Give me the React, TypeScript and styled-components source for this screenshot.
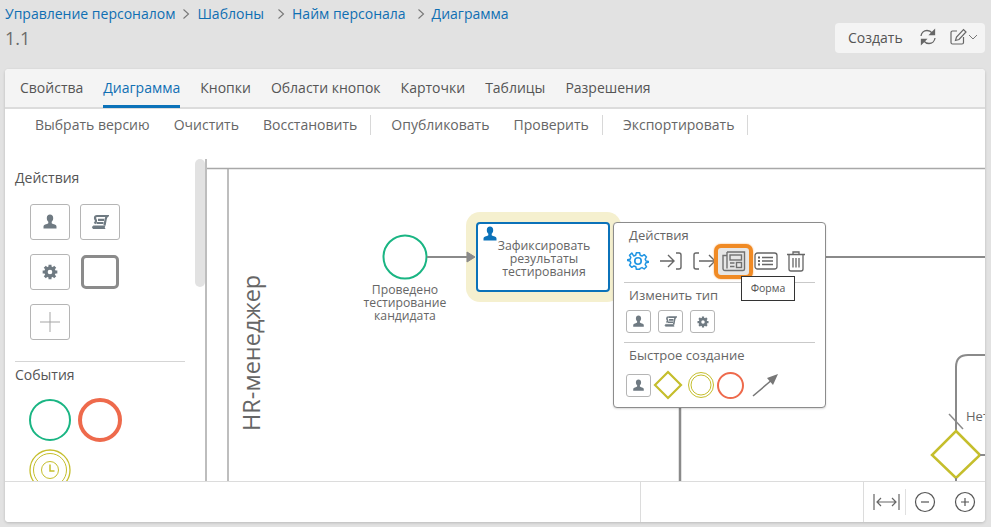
import React from 'react';
import styled, { createGlobalStyle } from 'styled-components';

const colors = {
  link: '#0f6fb3',
  text: '#555555',
  icon: '#6f7a82',
  border: '#b5b5b5',
  line: '#8a8a8a',
  green: '#1ab583',
  red: '#ee6a4c',
  olive: '#c5be2c',
  blue: '#0b72b9',
};

const GlobalStyle = createGlobalStyle`
  html, body {
    margin: 0;
    padding: 0;
    background: #e2e2e2;
    font-family: "Open Sans", "Noto Sans", sans-serif;
    overflow: hidden;
  }
`;

const Page = styled('div')`
  display: flex;
  flex-direction: column;
  width: 991px;
  height: 527px;
  overflow: hidden;
`;

const Header = styled('header')`
  display: flex;
  justify-content: space-between;
  height: 69px;
  padding: 4px 6px 0 5px;
  box-sizing: border-box;
`;

const Crumbs = styled('nav')`
  display: flex;
  align-items: center;
  gap: 4px;
  height: 19px;
  font-size: 14px;
  color: ${colors.link};
`;

const Crumb = styled('span')<{ $after?: number }>`
  margin-right: ${props => props.$after ?? 0}px;
`;

const Title = styled('div')`
  margin-top: 3px;
  font-size: 18px;
  line-height: 24px;
  color: #6b6b6b;
`;

const HeaderTools = styled('div')`
  display: flex;
  align-items: center;
  align-self: flex-start;
  box-sizing: border-box;
  width: 150px;
  height: 30px;
  margin-top: 19px;
  padding: 0 0 2px 13px;
  background: #f4f4f4;
  border-radius: 4px;
  font-size: 14px;
  color: ${colors.text};
`;

const CreateLabel = styled('span')`
  margin-right: 16px;
`;

const ToolGap = styled('span')`
  width: 12px;
`;

const Card = styled('main')`
  display: flex;
  flex-direction: column;
  flex: 1;
  margin: 0 6px 5px 5px;
  background: #fff;
  border-radius: 4px;
  box-shadow: 0 1px 3px rgba(0, 0, 0, 0.18);
  overflow: hidden;
`;

const Tabs = styled('div')`
  display: flex;
  gap: 20px;
  flex: none;
  box-sizing: border-box;
  height: 40px;
  padding-left: 15px;
  background: #f4f4f4;
  border-bottom: 2px solid #dcdcdc;
`;

const Tab = styled('div')<{ $active?: boolean }>`
  height: 39px;
  box-sizing: border-box;
  padding-top: 9px;
  font-size: 14px;
  line-height: 20px;
  color: ${props => (props.$active ? colors.link : '#555')};
  border-bottom: 3px solid ${props => (props.$active ? colors.blue : 'transparent')};
`;

const Actions = styled('div')`
  display: flex;
  align-items: center;
  flex: none;
  height: 31px;
  padding-left: 30px;
  font-size: 14px;
  color: #666;
`;

const Action = styled('span')`
  margin-right: 24px;
`;

const ActionDivider = styled('span')`
  width: 1px;
  height: 20px;
  margin: 0 20px 0 -11px;
  background: #d8d8d8;
`;

const Body = styled('div')`
  display: flex;
  flex: 1;
  min-height: 0;
`;

const Palette = styled('aside')`
  position: relative;
  flex: none;
  width: 200px;
  box-sizing: border-box;
  padding: 29px 0 0 10px;
  overflow: hidden;
`;

const Scroll = styled('div')`
  position: absolute;
  top: 19px;
  right: 0;
  width: 10px;
  height: 128px;
  background: #e2e2e2;
  border-radius: 5px;
`;

const PaletteTitle = styled('div')`
  font-size: 14px;
  line-height: 18px;
  color: ${colors.text};
`;

const ToolGrid = styled('div')`
  display: grid;
  grid-template-columns: 40px 40px;
  grid-auto-rows: 36px;
  gap: 14px 10px;
  margin: 17px 0 0 15px;
`;

const ToolButton = styled('div')<{ $small?: boolean }>`
  display: flex;
  align-items: center;
  justify-content: center;
  box-sizing: border-box;
  width: ${props => (props.$small ? '25px' : '40px')};
  height: ${props => (props.$small ? '23px' : '36px')};
  background: #fff;
  border: 1px solid ${colors.border};
  border-radius: 3px;
`;

const TaskShape = styled('div')`
  box-sizing: border-box;
  width: 38px;
  height: 34px;
  margin: 1px;
  border: 3px solid #8b8b8b;
  border-radius: 5px;
`;

const PaletteRule = styled('div')`
  width: 170px;
  height: 1px;
  margin: 21px 0 4px;
  background: #d5d5d5;
`;

const EventGrid = styled('div')`
  display: grid;
  grid-template-columns: 44px 44px;
  justify-items: center;
  align-items: center;
  gap: 6px;
  margin: 14px 0 0 13px;
`;

const Canvas = styled('section')`
  position: relative;
  flex: 1;
  overflow: hidden;
  border-left: 2px solid #bdbdbd;
  margin-top: 19px;
`;

const CanvasDrawing = styled('svg')`
  position: absolute;
  left: 0;
  top: 0;
`;

const LaneTitle = styled('div')`
  position: absolute;
  left: 24px;
  top: 116px;
  width: 40px;
  height: 156px;
  writing-mode: vertical-rl;
  transform: rotate(180deg);
  font-size: 23.5px;
  line-height: 40px;
  text-align: center;
  color: #666;
  white-space: nowrap;
`;

const Highlight = styled('div')`
  position: absolute;
  left: 259px;
  top: 53px;
  width: 155px;
  height: 90px;
  background: #f5f0cf;
  border-radius: 14px;
`;

const TaskNode = styled('div')`
  position: absolute;
  left: 269px;
  top: 63px;
  display: flex;
  align-items: center;
  justify-content: center;
  box-sizing: border-box;
  width: 134px;
  height: 70px;
  padding: 3px 0 0 2px;
  background: #fff;
  border: 2px solid ${colors.blue};
  border-radius: 4px;
  font-size: 12.3px;
  line-height: 13px;
  text-align: center;
  color: #666;
`;

const TaskBadge = styled('div')`
  position: absolute;
  left: 4px;
  top: 2px;
  line-height: 0;
`;

const NodeLabel = styled('div')`
  position: absolute;
  left: 148px;
  top: 124px;
  width: 100px;
  font-size: 12.2px;
  line-height: 13px;
  text-align: center;
  color: #666;
`;

const FlowLabel = styled('div')`
  position: absolute;
  left: 759px;
  top: 248px;
  font-size: 13px;
  line-height: 18px;
  color: #666;
`;

const Popup = styled('div')`
  position: absolute;
  left: 406px;
  top: 63px;
  box-sizing: border-box;
  width: 213px;
  height: 186px;
  padding: 3px 10px 0 10px;
  background: #fff;
  border: 1px solid #8c8c8c;
  border-radius: 4px;
  box-shadow: 0 1px 2px rgba(0, 0, 0, 0.15);
`;

const PopupTitle = styled('div')`
  margin-left: 5px;
  font-size: 13px;
  line-height: 18px;
  color: #666;
`;

const PopupRow = styled('div')<{ $gap: number; $top: number; $bottom?: number }>`
  display: flex;
  align-items: center;
  gap: ${props => props.$gap}px;
  margin: ${props => props.$top}px 0 ${props => props.$bottom ?? 0}px 2px;
`;

const PopupIcons = styled('div')`
  display: flex;
  align-items: center;
  height: 28px;
  margin: 3px 0 7px -3px;
`;

const IconSlot = styled('div')<{ $active?: boolean; $shift?: number }>`
  display: flex;
  align-items: center;
  justify-content: center;
  box-sizing: border-box;
  flex: none;
  width: ${props => (props.$active ? '39px' : '33px')};
  height: ${props => (props.$active ? '35px' : '28px')};
  margin: ${props => (props.$active ? '0 -4px 0 -6px' : `0 0 0 ${props.$shift ?? 0}px`)};
  ${props =>
    props.$active &&
    'background: #e6e6e6; border: 4px solid #f08a24; border-radius: 7px; box-shadow: 0 0 2px #f5a65c;'}
`;

const PopupRule = styled('div')`
  height: 1px;
  margin-bottom: 3px;
  background: #c9c9c9;
`;

const Tooltip = styled('div')`
  position: absolute;
  left: 127px;
  top: 53px;
  box-sizing: border-box;
  width: 54px;
  height: 25px;
  background: #fff;
  border: 1px solid #333;
  font-size: 10.5px;
  line-height: 23px;
  text-align: center;
  color: #555;
`;

const Footer = styled('footer')`
  display: flex;
  flex: none;
  height: 40px;
  border-top: 1px solid #dcdcdc;
  background: #fff;
`;

const FooterCell = styled('div')<{ $width: number }>`
  flex: none;
  display: flex;
  align-items: center;
  box-sizing: border-box;
  width: ${props => props.$width}px;
  border-right: 1px solid #dcdcdc;
`;

const Zoom = styled('div')`
  display: flex;
  align-items: center;
  gap: 18px;
  padding-left: 9px;
`;

const ZoomFit = styled('div')`
  display: flex;
  align-items: center;
  margin-right: -10px;
`;

const ZoomDivider = styled('div')`
  width: 1px;
  height: 26px;
  margin-left: 5px;
  background: #e0e0e0;
`;

const Chevron = () => (
  <svg width="14" height="14" viewBox="0 0 14 14" fill="none" stroke="#777" strokeWidth="1.1">
    <path d="M4.5 2.5 9.5 7 4.5 11.5" />
  </svg>
);

const UserIcon: React.FC<{ size?: number; color?: string }> = ({ size = 16, color = colors.icon }) => (
  <svg width={size} height={size} viewBox="0 0 16 16" fill={color}>
    <path d="M8 .5c2 0 3.2 1.5 3.2 3.5 0 1.6-.6 3-1.500 3.800v1.400c0 .5 2.200.9 3.500 1.600.8.4 1.300 1 1.300 1.900v1.800H1.500v-1.800c0-.9.5-1.500 1.300-1.900 1.300-.7 3.500-1.100 3.500-1.600V7.800C5.400 7 4.800 5.600 4.800 4 4.800 2 6 .5 8 .5Z" />
  </svg>
);

const ScriptIcon: React.FC<{ size?: number }> = ({ size = 18 }) => (
  <svg width={size} height={size} viewBox="0 0 18 18" fill="none" stroke={colors.icon} strokeWidth="2.200">
    <path d="M6 3h10.500c-1 .8-1.500 1.500-1.800 3l-1.200 6.500" />
    <path d="M6 3C4.500 3 4 4 4 5c0 1.200 1 1.500 1 3 0 1.300-1 1.800-1.500 2.500" />
    <path d="M7 6.800h6M5.500 10h7" />
    <path d="M2 15.500c-.8-.8-.6-2.200.5-2.500h11.500c-.8.800-.8 1.800 0 2.500z" fill={colors.icon} strokeWidth="1" />
  </svg>
);

const GearIcon: React.FC<{ size?: number; color?: string }> = ({ size = 16, color = colors.icon }) => (
  <svg width={size} height={size} viewBox="0 0 24 24" fill="none" stroke={color} strokeWidth="5">
    <circle cx="12" cy="12" r="6" />
    <path strokeWidth="4.500" d="M12 1v4M12 19v4M1 12h4M19 12h4M4.200 4.200l2.900 2.900M16.900 16.900l2.900 2.900M4.200 19.800l2.900-2.900M16.900 7.100l2.900-2.900" />
  </svg>
);

const OutlineGear = () => (
  <svg width="22" height="22" viewBox="0 0 24 24" fill="none" stroke="#2196e3" strokeWidth="1.800" strokeLinejoin="round">
    <circle cx="12" cy="12" r="3.500" />
    <path d="M10 2h4l.6 3 2.300 1 2.600-1.700 2.800 2.800-1.600 2.600 1 2.300 3 .6v.8l-3 .6-1 2.300 1.600 2.600-2.800 2.800-2.600-1.700-2.300 1L14 22h-4l-.6-3-2.300-1-2.600 1.700-2.800-2.800 1.600-2.600-1-2.300-3-.6v-.8l3-.6 1-2.300-1.600-2.600 2.800-2.800L6.900 6l2.300-1z" transform="translate(1.200 1.200) scale(.9)" />
  </svg>
);

const EnterIcon = () => (
  <svg width="24" height="20" viewBox="0 0 24 20" fill="none" stroke="#666" strokeWidth="1.400">
    <path d="M1 10h13M9 4l6 6-6 6" />
    <path d="M17 2h3c1.500 0 2 .8 2 2v12c0 1.200-.5 2-2 2h-3" />
  </svg>
);

const ExitIcon = () => (
  <svg width="24" height="20" viewBox="0 0 24 20" fill="none" stroke="#666" strokeWidth="1.400">
    <path d="M7 2H4C2.500 2 2 2.800 2 4v12c0 1.200.5 2 2 2h3" />
    <path d="M7 10h16M17 4l6 6-6 6" />
  </svg>
);

const FormIcon = () => (
  <svg width="24" height="22" viewBox="0 0 24 22" fill="none" stroke="#707070" strokeWidth="1.400">
    <path d="M5 2h17.500v17c0 .8-.5 1.500-1.500 1.500H3c-1.200 0-2-.8-2-2V5.500h4" />
    <path d="M5 2v16.500" />
    <rect x="8" y="5" width="11.500" height="5" />
    <path d="M8 13h4.500M8 16.500h4.500" />
    <rect x="14.500" y="12.500" width="5" height="5" />
  </svg>
);

const ListIcon = () => (
  <svg width="24" height="20" viewBox="0 0 24 20" fill="none" stroke="#666" strokeWidth="1.300">
    <rect x="1" y="2" width="22" height="16" rx="2.500" />
    <path d="M8 6.500h11M8 10h11M8 13.500h11" />
    <path strokeWidth="2" d="M4 6.500h2M4 10h2M4 13.500h2" />
  </svg>
);

const TrashIcon = () => (
  <svg width="20" height="22" viewBox="0 0 20 22" fill="none" stroke="#666" strokeWidth="1.300">
    <path d="M1 4.500h18M7 4.500V2h6v2.500" />
    <path d="M3 4.500V19c0 1.200.6 2 2 2h10c1.400 0 2-.8 2-2V4.500" />
    <path d="M7 8v9.500M10 8v9.500M13 8v9.500" />
  </svg>
);

const RefreshIcon = () => (
  <svg width="18" height="18" viewBox="0 0 18 18" fill="none" stroke="#666" strokeWidth="1.300">
    <path d="M2 8c.4-3.300 3-5.500 6-5.500 2.200 0 3.800.8 5.200 2.500" />
    <path d="M16 10c-.4 3.300-3 5.500-6 5.500-2.200 0-3.800-.8-5.200-2.500" />
    <path fill="#666" d="M15.500 2v4.500H11zM2.500 16v-4.500H7z" />
  </svg>
);

const EditIcon = () => (
  <svg width="18" height="18" viewBox="0 0 18 18" fill="none" stroke="#666" strokeWidth="1.200">
    <path d="M8 3H3.500C2.500 3 2 3.600 2 4.500v10c0 1 .5 1.500 1.500 1.500h9.500c1 0 1.500-.5 1.500-1.500V9" />
    <path d="M6.500 12.500 7.500 9 14.500 1.500 17 4l-7 7.500z" />
  </svg>
);

const TimerEvent = () => (
  <svg width="44" height="44" viewBox="0 0 44 44" fill="none" stroke={colors.olive}>
    <circle cx="22" cy="22" r="20" strokeWidth="1.300" />
    <circle cx="22" cy="22" r="16.500" strokeWidth="1" />
    <circle cx="22" cy="22" r="8.500" strokeWidth="1" />
    <path strokeWidth="1.500" d="M22 16.500V23h4.500" />
  </svg>
);

const Circle: React.FC<{ size: number; color: string; stroke: number }> = ({ size, color, stroke }) => (
  <svg width={size} height={size} viewBox={`0 0 ${size} ${size}`} fill="none">
    <circle cx={size / 2} cy={size / 2} r={size / 2 - stroke / 2} stroke={color} strokeWidth={stroke} />
  </svg>
);

const Diagram = () => (
  // координаты канвы: x - 207, y - 159 от скриншота
  <CanvasDrawing width="780" height="324" viewBox="207 159 780 324" fill="none">
    <path d="M207 168.500H985" stroke="#a8a8a8" strokeWidth="1.500" />
    <path d="M228 168V482" stroke="#a8a8a8" strokeWidth="1.500" />
    <circle cx="405" cy="257" r="21.500" stroke={colors.green} strokeWidth="2" />
    <path d="M427 257H468" stroke={colors.line} strokeWidth="2" />
    <path d="M467 252 475 257 467 262Z" fill={colors.line} stroke={colors.line} />
    <path d="M826 257H985" stroke={colors.line} strokeWidth="2" />
    <path d="M680 407V482" stroke={colors.line} strokeWidth="2.500" />
    <path d="M956 430V367C956 359 960 355 968 355H985" stroke={colors.line} strokeWidth="2" />
    <path d="M949 414 963 429" stroke={colors.line} strokeWidth="1.500" />
    <path d="M956 431 980 455 956 478 932 455Z" stroke={colors.olive} strokeWidth="2.500" />
    <path d="M980 455H985M956 478V482" stroke={colors.line} strokeWidth="2" />
  </CanvasDrawing>
);

const App: React.FC = () => (
  <Page>
    <GlobalStyle />
    <Header>
      <div>
        <Crumbs>
          <Crumb>Управление персоналом</Crumb>
          <Chevron />
          <Crumb $after={6}>Шаблоны</Crumb>
          <Chevron />
          <Crumb $after={4}>Найм персонала</Crumb>
          <Chevron />
          <Crumb>Диаграмма</Crumb>
        </Crumbs>
        <Title>1.1</Title>
      </div>
      <HeaderTools>
        <CreateLabel>Создать</CreateLabel>
        <RefreshIcon />
        <ToolGap />
        <EditIcon />
        <svg width="12" height="12" viewBox="0 0 12 12" fill="none" stroke="#777">
          <path d="M2 4l4 4 4-4" />
        </svg>
      </HeaderTools>
    </Header>
    <Card>
      <Tabs>
        <Tab>Свойства</Tab>
        <Tab $active>Диаграмма</Tab>
        <Tab>Кнопки</Tab>
        <Tab>Области кнопок</Tab>
        <Tab>Карточки</Tab>
        <Tab>Таблицы</Tab>
        <Tab>Разрешения</Tab>
      </Tabs>
      <Actions>
        <Action>Выбрать версию</Action>
        <Action>Очистить</Action>
        <Action>Восстановить</Action>
        <ActionDivider />
        <Action>Опубликовать</Action>
        <Action>Проверить</Action>
        <ActionDivider />
        <Action>Экспортировать</Action>
        <ActionDivider />
      </Actions>
      <Body>
        <Palette>
          <Scroll />
          <PaletteTitle>Действия</PaletteTitle>
          <ToolGrid>
            <ToolButton>
              <UserIcon />
            </ToolButton>
            <ToolButton>
              <ScriptIcon />
            </ToolButton>
            <ToolButton>
              <GearIcon />
            </ToolButton>
            <TaskShape />
            <ToolButton>
              <svg width="20" height="20" viewBox="0 0 20 20" stroke="#a5a5a5" strokeWidth="1">
                <path d="M10 0V20M0 10H20" />
              </svg>
            </ToolButton>
          </ToolGrid>
          <PaletteRule />
          <PaletteTitle>События</PaletteTitle>
          <EventGrid>
            <Circle size={42} color={colors.green} stroke={2} />
            <Circle size={44} color={colors.red} stroke={4} />
            <TimerEvent />
          </EventGrid>
        </Palette>
        <Canvas>
          <Highlight />
          <Diagram />
          <LaneTitle>HR-менеджер</LaneTitle>
          <NodeLabel>
            Проведено
            <br />
            тестирование
            <br />
            кандидата
          </NodeLabel>
          <TaskNode>
            <TaskBadge>
              <UserIcon size={16} color={colors.blue} />
            </TaskBadge>
            <span>
              Зафиксировать
              <br />
              результаты
              <br />
              тестирования
            </span>
          </TaskNode>
          <FlowLabel>Нет</FlowLabel>
          <Popup>
            <PopupTitle>Действия</PopupTitle>
            <PopupIcons>
              <IconSlot>
                <OutlineGear />
              </IconSlot>
              <IconSlot>
                <EnterIcon />
              </IconSlot>
              <IconSlot>
                <ExitIcon />
              </IconSlot>
              <IconSlot $active>
                <FormIcon />
              </IconSlot>
              <IconSlot>
                <ListIcon />
              </IconSlot>
              <IconSlot $shift={-3}>
                <TrashIcon />
              </IconSlot>
            </PopupIcons>
            <PopupRule />
            <PopupTitle>Изменить тип</PopupTitle>
            <PopupRow $gap={7} $top={6} $bottom={9}>
              <ToolButton $small>
                <UserIcon size={13} />
              </ToolButton>
              <ToolButton $small>
                <ScriptIcon size={13} />
              </ToolButton>
              <ToolButton $small>
                <GearIcon size={12} />
              </ToolButton>
            </PopupRow>
            <PopupRule />
            <PopupTitle>Быстрое создание</PopupTitle>
            <PopupRow $gap={2} $top={6}>
              <ToolButton $small>
                <UserIcon size={13} />
              </ToolButton>
              <svg width="30" height="30" viewBox="0 0 30 30" fill="none" stroke={colors.olive} strokeWidth="2.200">
                <path d="M15 2 28 15 15 28 2 15Z" />
              </svg>
              <svg width="28" height="28" viewBox="0 0 28 28" fill="none" stroke={colors.olive} strokeWidth="1" style={{ marginLeft: 2 }}>
                <circle cx="14" cy="14" r="12.500" />
                <circle cx="14" cy="14" r="10" />
              </svg>
              <Circle size={27} color={colors.red} stroke={2} />
              <svg width="30" height="26" viewBox="0 0 30 26" fill="none" style={{ marginLeft: 5 }}>
                <path d="M2 24 22 7" stroke="#777" strokeWidth="1.500" />
                <path d="M27 2 22 13 16 6Z" fill="#777" />
              </svg>
            </PopupRow>
            <Tooltip>Форма</Tooltip>
          </Popup>
        </Canvas>
      </Body>
      <Footer>
        <FooterCell $width={636} />
        <FooterCell $width={223} />
        <Zoom>
          <ZoomFit>
            <svg width="27" height="18" viewBox="0 0 27 18" fill="none" stroke="#666" strokeWidth="1.200">
              <path d="M1 1V17M26 1V17M4 9H23M8 5 4 9 8 13M19 5 23 9 19 13" />
            </svg>
            <ZoomDivider />
          </ZoomFit>
          <svg width="22" height="22" viewBox="0 0 22 22" fill="none" stroke="#555" strokeWidth="1.200">
            <circle cx="11" cy="11" r="9.500" />
            <path d="M7 11H15" />
          </svg>
          <svg width="22" height="22" viewBox="0 0 22 22" fill="none" stroke="#555" strokeWidth="1.200">
            <circle cx="11" cy="11" r="9.500" />
            <path d="M7 11H15M11 7V15" />
          </svg>
        </Zoom>
      </Footer>
    </Card>
  </Page>
);

export default App;
